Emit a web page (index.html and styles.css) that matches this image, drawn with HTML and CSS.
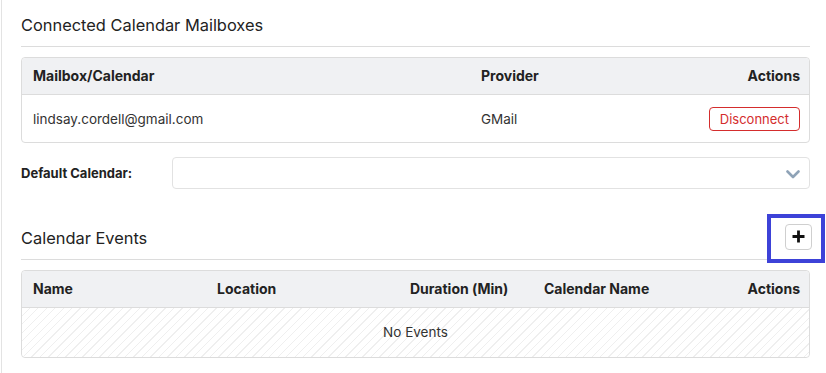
FILE: index.html
```html
<!DOCTYPE html>
<html lang="en">
<head>
    <meta charset="UTF-8">
    <meta name="viewport" content="width=device-width, initial-scale=1.0">
    <title>Calendar Settings</title>
    <link rel="stylesheet" href="styles.css">
</head>
<body>
    <div class="panel">
        <div class="section-head">
            <h2>Connected Calendar Mailboxes</h2>
        </div>

        <table class="grid mailboxes">
            <colgroup>
                <col class="c-mailbox">
                <col class="c-provider">
                <col>
            </colgroup>
            <thead>
                <tr>
                    <th>Mailbox/Calendar</th>
                    <th>Provider</th>
                    <th class="right">Actions</th>
                </tr>
            </thead>
            <tbody>
                <tr>
                    <td>lindsay.cordell@gmail.com</td>
                    <td>GMail</td>
                    <td class="right"><button class="btn-danger">Disconnect</button></td>
                </tr>
            </tbody>
        </table>

        <div class="form-row">
            <label for="default-calendar">Default Calendar:</label>
            <div class="select-wrap">
                <select id="default-calendar"></select>
                <svg class="chevron" width="14" height="9" viewBox="0 0 14 9">
                    <path d="M1.5 1.5 L7 7 L12.5 1.5" fill="none" stroke="#8fa3b7" stroke-width="2.6" stroke-linecap="round" stroke-linejoin="round"/>
                </svg>
            </div>
        </div>

        <div class="section-head events-head">
            <h2>Calendar Events</h2>
            <div class="add-wrap">
                <button class="btn-add" aria-label="Add event">
                    <svg width="13" height="13" viewBox="0 0 13 13">
                        <path d="M6.5 0.5 V12.5 M0.5 6.5 H12.5" stroke="#111" stroke-width="2.8"/>
                    </svg>
                </button>
            </div>
        </div>

        <table class="grid events">
            <colgroup>
                <col class="c-name">
                <col class="c-location">
                <col class="c-duration">
                <col class="c-calendar">
                <col>
            </colgroup>
            <thead>
                <tr>
                    <th>Name</th>
                    <th>Location</th>
                    <th>Duration (Min)</th>
                    <th>Calendar Name</th>
                    <th class="right">Actions</th>
                </tr>
            </thead>
            <tbody>
                <tr>
                    <td colspan="5" class="empty">No Events</td>
                </tr>
            </tbody>
        </table>
    </div>
</body>
</html>
```

FILE: styles.css
```css
body {
    margin: 0;
    font-family: Inter, "Noto Sans", Arial, sans-serif;
    color: #222;
    background: #fff;
}
.panel {
    margin-left: 1px;
    border-left: 1px solid #e3e3e3;
    padding: 0 16px 0 19px;
    min-height: 373px;
    box-sizing: border-box;
}
.section-head {
    display: flex;
    justify-content: space-between;
    align-items: center;
    padding-top: 13px;
    padding-bottom: 9px;
    border-bottom: 1px solid #dcdcdc;
    margin-bottom: 10px;
}
.section-head h2 {
    margin: 0;
    font-size: 16.4px;
    font-weight: 400;
    line-height: 24px;
    color: #222;
}
.events-head {
    margin-top: 34px;
    padding-top: 0;
}
.events-head h2 {
    padding-top: 3px;
}

.grid {
    width: 100%;
    table-layout: fixed;
    border-collapse: separate;
    border-spacing: 0;
    border: 1px solid #dcdcdc;
    border-radius: 4px;
    font-size: 14px;
}
.grid th {
    background-color: #f0f1f3;
    font-weight: 700;
    text-align: left;
    padding: 9px 11px;
    line-height: 18px;
    border-bottom: 1px solid #dcdcdc;
    color: #222;
}
.grid th:first-child {
    border-top-left-radius: 4px;
}
.grid th:last-child {
    border-top-right-radius: 4px;
}
.grid td {
    padding: 11px 11px;
    line-height: 24px;
    font-size: 13.5px;
    color: #333;
}
.grid .right {
    text-align: right;
    padding-right: 9px;
}
.c-mailbox {
    width: 448px;
}
.c-provider {
    width: 180px;
}
.c-name {
    width: 184px;
}
.c-location {
    width: 193px;
}
.c-duration {
    width: 134px;
}
.c-calendar {
    width: 160px;
}
.empty {
    text-align: center;
    padding: 15px 11px !important;
    line-height: 19px !important;
    background: repeating-linear-gradient(
        135deg,
        #fff 0px,
        #fff 5px,
        #efefef 5px,
        #efefef 6px
    );
    border-bottom-left-radius: 4px;
    border-bottom-right-radius: 4px;
}

.btn-danger {
    font-family: inherit;
    font-size: 13px;
    color: #d42d2d;
    background: #fff;
    border: 1px solid #d42d2d;
    border-radius: 4px;
    padding: 0 10px;
    height: 24px;
    line-height: 22px;
    cursor: pointer;
    vertical-align: middle;
}

.form-row {
    display: flex;
    align-items: center;
    margin-top: 14px;
}
.form-row label {
    width: 151px;
    font-size: 13px;
    font-weight: 700;
    color: #222;
}
.select-wrap {
    flex: 1;
    position: relative;
}
.select-wrap select {
    display: block;
    width: 100%;
    height: 32px;
    border: 1px solid #e2e2e2;
    border-radius: 4px;
    background: #fff;
    appearance: none;
    -webkit-appearance: none;
}
.chevron {
    position: absolute;
    right: 10px;
    top: 13px;
}

.add-wrap {
    position: relative;
    margin-right: -2px;
}
.add-wrap::after {
    content: "";
    position: absolute;
    left: -18px;
    right: -13px;
    top: -10px;
    bottom: -13px;
    border: 4px solid #3d42d8;
    pointer-events: none;
}
.btn-add {
    display: flex;
    align-items: center;
    justify-content: center;
    width: 27px;
    height: 26px;
    padding: 0;
    background: #fff;
    border: 1px solid #cfcfcf;
    border-radius: 4px;
    cursor: pointer;
}
```
